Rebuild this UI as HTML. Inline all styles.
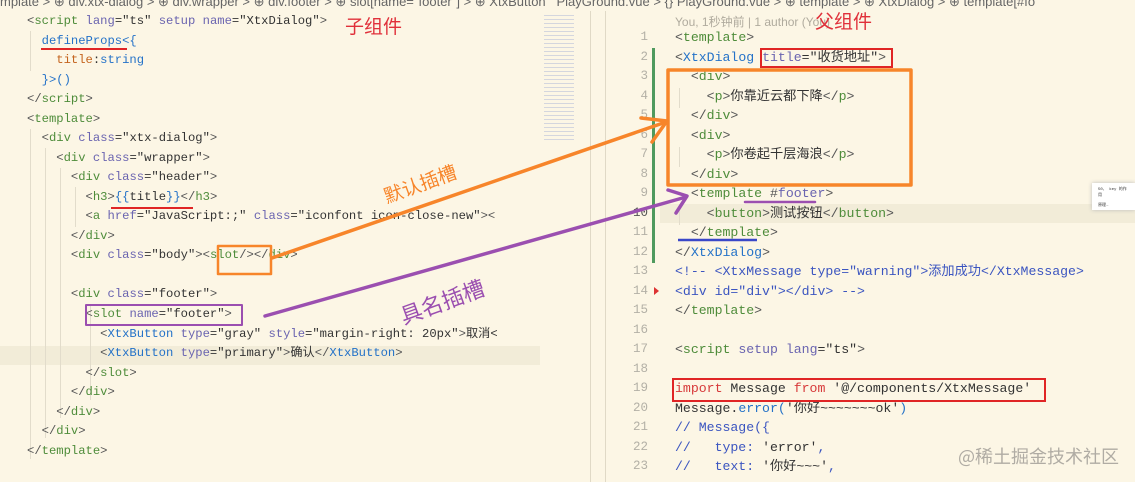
<!DOCTYPE html>
<html><head><meta charset="utf-8"><style>
body{margin:0;width:1135px;height:482px;overflow:hidden;background:#fcf6e5;position:relative;font-family:"Liberation Mono","Noto Sans CJK SC",monospace;font-size:12.2px;color:#333}
.l{position:absolute;white-space:pre;line-height:19.5px;height:19.5px}
#R .l{font-size:13.2px}
.n{position:absolute;width:30px;text-align:right;color:#b3b0a6;font-family:"Liberation Mono",monospace;font-size:12.5px;line-height:19.5px}
.p{color:#555}.t{color:#4e8c3a}.a{color:#6a64b0}.s{color:#333}.b{color:#2472c8}.o{color:#c4641e}.r{color:#d73a3a}.c{color:#3b55c0}
.g{position:absolute;border-left:1px solid #e2dccb}
.zh{font-family:"Noto Sans CJK SC",sans-serif}
#L .l{margin-top:1px}
</style></head><body>
<div style="position:absolute;left:0;top:-5px;width:1135px;height:16px;font-family:'Liberation Sans',sans-serif;font-size:13px;color:#666;line-height:14px;white-space:nowrap;overflow:hidden">mplate &gt; ⊕ div.xtx-dialog &gt; ⊕ div.wrapper &gt; ⊕ div.footer &gt; ⊕ slot[name="footer"] &gt; ⊕ XtxButton &nbsp; PlayGround.vue &gt; {} PlayGround.vue &gt; ⊕ template &gt; ⊕ XtxDialog &gt; ⊕ template[#fo</div>
<div style="position:absolute;left:0;top:346px;width:540px;height:19px;background:#f2ecd8"></div>
<div style="position:absolute;left:660px;top:204px;width:475px;height:19px;background:#f2ecd8"></div>
<div style="position:absolute;left:590px;top:11px;width:1px;height:471px;background:#e0d9c6"></div>
<div style="position:absolute;left:605px;top:11px;width:1px;height:471px;background:#e0d9c6"></div>
<div style="position:absolute;left:544px;top:12px;width:30px;height:128px;opacity:.35;background:repeating-linear-gradient(#fcf6e5 0 3px,#8a9ad0 3px 4px)"></div>
<div style="position:absolute;left:652px;top:48px;width:3px;height:215px;background:#4f9a5e"></div>
<div style="position:absolute;left:654px;top:287px;border-left:5px solid #d33;border-top:4px solid transparent;border-bottom:4px solid transparent"></div>
<div class="g" style="left:30px;top:31px;height:40px"></div>
<div class="g" style="left:30px;top:129px;height:330px"></div>
<div class="g" style="left:45px;top:148px;height:290px"></div>
<div class="g" style="left:60px;top:168px;height:250px"></div>
<div class="g" style="left:75px;top:187px;height:40px"></div>
<div class="g" style="left:90px;top:305px;height:95px"></div>
<div class="g" style="left:679px;top:88px;height:20px"></div>
<div class="g" style="left:679px;top:147px;height:20px"></div>
<div class="g" style="left:679px;top:205px;height:20px"></div>
<div id="L">
<div class="l" style="left:27px;top:11px"><span class="p">&lt;</span><span class="t">script</span> <span class="a">lang</span>=<span class="s">"ts"</span> <span class="a">setup</span> <span class="a">name</span>=<span class="s">"XtxDialog"</span><span class="p">&gt;</span></div>
<div class="l" style="left:27px;top:31px">  <span class="b">defineProps</span><span class="b">&lt;{</span></div>
<div class="l" style="left:27px;top:50px">    <span class="o">title</span>:<span class="b">string</span></div>
<div class="l" style="left:27px;top:70px">  <span class="b">}&gt;()</span></div>
<div class="l" style="left:27px;top:89px"><span class="p">&lt;/</span><span class="t">script</span><span class="p">&gt;</span></div>
<div class="l" style="left:27px;top:109px"><span class="p">&lt;</span><span class="t">template</span><span class="p">&gt;</span></div>
<div class="l" style="left:27px;top:128px">  <span class="p">&lt;</span><span class="t">div</span> <span class="a">class</span>=<span class="s">"xtx-dialog"</span><span class="p">&gt;</span></div>
<div class="l" style="left:27px;top:148px">    <span class="p">&lt;</span><span class="t">div</span> <span class="a">class</span>=<span class="s">"wrapper"</span><span class="p">&gt;</span></div>
<div class="l" style="left:27px;top:167px">      <span class="p">&lt;</span><span class="t">div</span> <span class="a">class</span>=<span class="s">"header"</span><span class="p">&gt;</span></div>
<div class="l" style="left:27px;top:187px">        <span class="p">&lt;</span><span class="t">h3</span><span class="p">&gt;</span><span class="b">{{</span>title<span class="b">}}</span><span class="p">&lt;/</span><span class="t">h3</span><span class="p">&gt;</span></div>
<div class="l" style="left:27px;top:206px">        <span class="p">&lt;</span><span class="t">a</span> <span class="a">href</span>=<span class="s">"JavaScript:;"</span> <span class="a">class</span>=<span class="s">"iconfont icon-close-new"</span><span class="p">&gt;&lt;</span></div>
<div class="l" style="left:27px;top:226px">      <span class="p">&lt;/</span><span class="t">div</span><span class="p">&gt;</span></div>
<div class="l" style="left:27px;top:245px">      <span class="p">&lt;</span><span class="t">div</span> <span class="a">class</span>=<span class="s">"body"</span><span class="p">&gt;&lt;</span><span class="t">slot</span><span class="p">/&gt;&lt;/</span><span class="t">div</span><span class="p">&gt;</span></div>
<div class="l" style="left:27px;top:284px">      <span class="p">&lt;</span><span class="t">div</span> <span class="a">class</span>=<span class="s">"footer"</span><span class="p">&gt;</span></div>
<div class="l" style="left:27px;top:304px">        <span class="p">&lt;</span><span class="t">slot</span> <span class="a">name</span>=<span class="s">"footer"</span><span class="p">&gt;</span></div>
<div class="l" style="left:27px;top:324px;width:513px;overflow:hidden">          <span class="p">&lt;</span><span class="b">XtxButton</span> <span class="a">type</span>=<span class="s">"gray"</span> <span class="a">style</span>=<span class="s">"margin-right: 20px"</span><span class="p">&gt;</span>取消&lt;</div>
<div class="l" style="left:27px;top:343px">          <span class="p">&lt;</span><span class="b">XtxButton</span> <span class="a">type</span>=<span class="s">"primary"</span><span class="p">&gt;</span>确认<span class="p">&lt;/</span><span class="b">XtxButton</span><span class="p">&gt;</span></div>
<div class="l" style="left:27px;top:363px">        <span class="p">&lt;/</span><span class="t">slot</span><span class="p">&gt;</span></div>
<div class="l" style="left:27px;top:382px">      <span class="p">&lt;/</span><span class="t">div</span><span class="p">&gt;</span></div>
<div class="l" style="left:27px;top:402px">    <span class="p">&lt;/</span><span class="t">div</span><span class="p">&gt;</span></div>
<div class="l" style="left:27px;top:421px">  <span class="p">&lt;/</span><span class="t">div</span><span class="p">&gt;</span></div>
<div class="l" style="left:27px;top:441px"><span class="p">&lt;/</span><span class="t">template</span><span class="p">&gt;</span></div>
</div>
<div style="position:absolute;left:675px;top:13px;font-family:'Liberation Sans','Noto Sans CJK SC',sans-serif;font-size:12px;color:#b0ab9e">You, 1秒钟前 | 1 author (You)</div>
<div class="n" style="left:618px;top:28px">1</div><div class="n" style="left:618px;top:48px">2</div><div class="n" style="left:618px;top:67px">3</div><div class="n" style="left:618px;top:87px">4</div><div class="n" style="left:618px;top:106px">5</div><div class="n" style="left:618px;top:126px">6</div><div class="n" style="left:618px;top:145px">7</div><div class="n" style="left:618px;top:165px">8</div><div class="n" style="left:618px;top:184px">9</div><div class="n" style="left:618px;top:204px;color:#555">10</div><div class="n" style="left:618px;top:223px">11</div><div class="n" style="left:618px;top:243px">12</div><div class="n" style="left:618px;top:262px">13</div><div class="n" style="left:618px;top:282px">14</div><div class="n" style="left:618px;top:301px">15</div><div class="n" style="left:618px;top:321px">16</div><div class="n" style="left:618px;top:340px">17</div><div class="n" style="left:618px;top:360px">18</div><div class="n" style="left:618px;top:379px">19</div><div class="n" style="left:618px;top:399px">20</div><div class="n" style="left:618px;top:418px">21</div><div class="n" style="left:618px;top:438px">22</div><div class="n" style="left:618px;top:457px">23</div>
<div id="R">
<div class="l" style="left:675px;top:28px"><span class="p">&lt;</span><span class="t">template</span><span class="p">&gt;</span></div>
<div class="l" style="left:675px;top:48px"><span class="p">&lt;</span><span class="b">XtxDialog</span> <span class="a">title</span>=<span class="s">"收货地址"</span><span class="p">&gt;</span></div>
<div class="l" style="left:675px;top:67px">  <span class="p">&lt;</span><span class="t">div</span><span class="p">&gt;</span></div>
<div class="l" style="left:675px;top:87px">    <span class="p">&lt;</span><span class="t">p</span><span class="p">&gt;</span>你靠近云都下降<span class="p">&lt;/</span><span class="t">p</span><span class="p">&gt;</span></div>
<div class="l" style="left:675px;top:106px">  <span class="p">&lt;/</span><span class="t">div</span><span class="p">&gt;</span></div>
<div class="l" style="left:675px;top:126px">  <span class="p">&lt;</span><span class="t">div</span><span class="p">&gt;</span></div>
<div class="l" style="left:675px;top:145px">    <span class="p">&lt;</span><span class="t">p</span><span class="p">&gt;</span>你卷起千层海浪<span class="p">&lt;/</span><span class="t">p</span><span class="p">&gt;</span></div>
<div class="l" style="left:675px;top:165px">  <span class="p">&lt;/</span><span class="t">div</span><span class="p">&gt;</span></div>
<div class="l" style="left:675px;top:184px">  <span class="p">&lt;</span><span class="t">template</span> <span class="p">#</span><span class="a">footer</span><span class="p">&gt;</span></div>
<div class="l" style="left:675px;top:204px">    <span class="p">&lt;</span><span class="t">button</span><span class="p">&gt;</span>测试按钮<span class="p">&lt;/</span><span class="t">button</span><span class="p">&gt;</span></div>
<div class="l" style="left:675px;top:223px">  <span class="p">&lt;/</span><span class="t">template</span><span class="p">&gt;</span></div>
<div class="l" style="left:675px;top:243px"><span class="p">&lt;/</span><span class="b">XtxDialog</span><span class="p">&gt;</span></div>
<div class="l c" style="left:675px;top:262px">&lt;!-- &lt;XtxMessage type="warning"&gt;添加成功&lt;/XtxMessage&gt;</div>
<div class="l c" style="left:675px;top:282px">&lt;div id="div"&gt;&lt;/div&gt; --&gt;</div>
<div class="l" style="left:675px;top:301px"><span class="p">&lt;/</span><span class="t">template</span><span class="p">&gt;</span></div>
<div class="l" style="left:675px;top:340px"><span class="p">&lt;</span><span class="t">script</span> <span class="a">setup</span> <span class="a">lang</span>=<span class="s">"ts"</span><span class="p">&gt;</span></div>
<div class="l" style="left:675px;top:379px"><span class="r">import</span> Message <span class="r">from</span> <span class="s">'@/components/XtxMessage'</span></div>
<div class="l" style="left:675px;top:399px">Message.<span class="b">error</span><span class="b">(</span>'你好~~~~~~~ok'<span class="b">)</span></div>
<div class="l c" style="left:675px;top:418px">// Message({</div>
<div class="l c" style="left:675px;top:438px">//   type: <span class="s">'error'</span>,</div>
<div class="l c" style="left:675px;top:457px">//   text: <span class="s">'你好~~~'</span>,</div>
</div>
<div style="position:absolute;left:1092px;top:183px;width:43px;height:27px;background:#fff;box-shadow:0 0 4px #bbb;font-size:4px;color:#333;padding:3px 6px;box-sizing:border-box">50、 key 的作用<br><br>原理…</div>

<svg width="1135" height="482" style="position:absolute;left:0;top:0" fill="none">
<g stroke="#e02525" stroke-width="2">
<line x1="41" y1="49" x2="127" y2="49"/><line x1="111" y1="208" x2="193" y2="208"/>
<rect x="761" y="49" width="131" height="18"/><rect x="673" y="379" width="372" height="22"/>
</g>
<g stroke="#f7852a" stroke-width="3.5" stroke-linecap="round" stroke-linejoin="round">
<rect x="218" y="246" width="53" height="28" stroke-width="2.5"/>
<rect x="668" y="70" width="243" height="115"/>
<line x1="272" y1="258" x2="666" y2="122"/>
<polyline points="641,118 667,121 652,142"/>
</g>
<g stroke="#9b4fb0" stroke-width="3.5" stroke-linecap="round" stroke-linejoin="round">
<rect x="86" y="305" width="156" height="20" stroke-width="2"/>
<line x1="265" y1="316" x2="686" y2="197"/>
<polyline points="668,190 687,196 676,213"/>
<line x1="745" y1="202" x2="815" y2="202" stroke-width="2.5"/>
</g>
<line x1="678" y1="240" x2="757" y2="240" stroke="#3a48c8" stroke-width="2.5"/>
</svg>
<div class="zh" style="position:absolute;left:345px;top:12px;font-size:19px;color:#e0303a">子组件</div>
<div class="zh" style="position:absolute;left:815px;top:7px;font-size:19px;color:#e0303a">父组件</div>
<div class="zh" style="position:absolute;left:382px;top:170px;font-size:19px;color:#f7852a;transform:rotate(-20deg)">默认插槽</div>
<div class="zh" style="position:absolute;left:398px;top:285px;font-size:22px;color:#9b4fb0;transform:rotate(-20deg)">具名插槽</div>
<div class="zh" style="position:absolute;left:958px;top:443px;font-size:18px;color:#b0aca4">@稀土掘金技术社区</div>
</body></html>
